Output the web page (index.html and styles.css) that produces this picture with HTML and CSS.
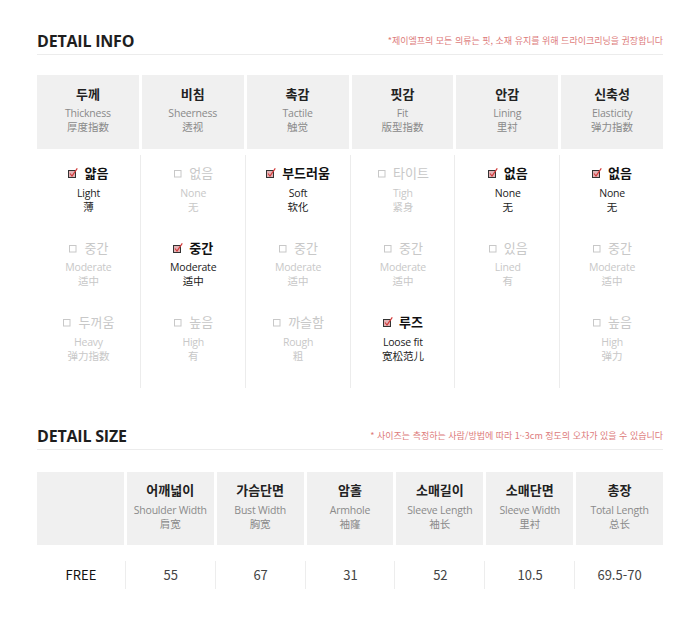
FILE: index.html
```html
<!DOCTYPE html>
<html lang="ko">
<head>
<meta charset="utf-8">
<title>Detail</title>
<link rel="stylesheet" href="styles.css">
</head>
<body>
<div class="page">
  <section class="sec info-sec">
    <div class="sec-head">
      <h2 class="sec-title">DETAIL INFO</h2>
      <p class="sec-note">*제이엘프의 모든 의류는 핏, 소재 유지를 위해 드라이크리닝을 권장합니다</p>
    </div>
    <div class="info-grid head-row">
      <div class="hcell"><div class="ko">두께</div><div class="en">Thickness</div><div class="zh">厚度指数</div></div>
      <div class="hcell"><div class="ko">비침</div><div class="en">Sheerness</div><div class="zh">透视</div></div>
      <div class="hcell"><div class="ko">촉감</div><div class="en">Tactile</div><div class="zh">触觉</div></div>
      <div class="hcell"><div class="ko">핏감</div><div class="en">Fit</div><div class="zh">版型指数</div></div>
      <div class="hcell"><div class="ko">안감</div><div class="en">Lining</div><div class="zh">里衬</div></div>
      <div class="hcell"><div class="ko">신축성</div><div class="en">Elasticity</div><div class="zh">弹力指数</div></div>
    </div>
    <div class="info-grid body-row">
      <div class="col">
        <div class="opt on"><div class="ko"><svg class="cb" viewBox="0 0 10 10"><rect x="0.5" y="2.5" width="7" height="7" fill="#e3b3b6" stroke="#333"/><polyline points="2,5.5 4,8 9.3,0.3" fill="none" stroke="#d23b3b" stroke-width="1.2"/></svg>얇음</div><div class="en">Light</div><div class="zh">薄</div></div>
        <div class="opt"><div class="ko"><svg class="cb" viewBox="0 0 10 10"><rect x="1.5" y="2.5" width="6.5" height="6.5" fill="none" stroke="#c8c8c8"/></svg>중간</div><div class="en">Moderate</div><div class="zh">适中</div></div>
        <div class="opt"><div class="ko"><svg class="cb" viewBox="0 0 10 10"><rect x="1.5" y="2.5" width="6.5" height="6.5" fill="none" stroke="#c8c8c8"/></svg>두꺼움</div><div class="en">Heavy</div><div class="zh">弹力指数</div></div>
      </div>
      <div class="col">
        <div class="opt"><div class="ko"><svg class="cb" viewBox="0 0 10 10"><rect x="1.5" y="2.5" width="6.5" height="6.5" fill="none" stroke="#c8c8c8"/></svg>없음</div><div class="en">None</div><div class="zh">无</div></div>
        <div class="opt on"><div class="ko"><svg class="cb" viewBox="0 0 10 10"><rect x="0.5" y="2.5" width="7" height="7" fill="#e3b3b6" stroke="#333"/><polyline points="2,5.5 4,8 9.3,0.3" fill="none" stroke="#d23b3b" stroke-width="1.2"/></svg>중간</div><div class="en">Moderate</div><div class="zh">适中</div></div>
        <div class="opt"><div class="ko"><svg class="cb" viewBox="0 0 10 10"><rect x="1.5" y="2.5" width="6.5" height="6.5" fill="none" stroke="#c8c8c8"/></svg>높음</div><div class="en">High</div><div class="zh">有</div></div>
      </div>
      <div class="col">
        <div class="opt on"><div class="ko"><svg class="cb" viewBox="0 0 10 10"><rect x="0.5" y="2.5" width="7" height="7" fill="#e3b3b6" stroke="#333"/><polyline points="2,5.5 4,8 9.3,0.3" fill="none" stroke="#d23b3b" stroke-width="1.2"/></svg>부드러움</div><div class="en">Soft</div><div class="zh">软化</div></div>
        <div class="opt"><div class="ko"><svg class="cb" viewBox="0 0 10 10"><rect x="1.5" y="2.5" width="6.5" height="6.5" fill="none" stroke="#c8c8c8"/></svg>중간</div><div class="en">Moderate</div><div class="zh">适中</div></div>
        <div class="opt"><div class="ko"><svg class="cb" viewBox="0 0 10 10"><rect x="1.5" y="2.5" width="6.5" height="6.5" fill="none" stroke="#c8c8c8"/></svg>까슬함</div><div class="en">Rough</div><div class="zh">粗</div></div>
      </div>
      <div class="col">
        <div class="opt"><div class="ko"><svg class="cb" viewBox="0 0 10 10"><rect x="1.5" y="2.5" width="6.5" height="6.5" fill="none" stroke="#c8c8c8"/></svg>타이트</div><div class="en">Tigh</div><div class="zh">紧身</div></div>
        <div class="opt"><div class="ko"><svg class="cb" viewBox="0 0 10 10"><rect x="1.5" y="2.5" width="6.5" height="6.5" fill="none" stroke="#c8c8c8"/></svg>중간</div><div class="en">Moderate</div><div class="zh">适中</div></div>
        <div class="opt on"><div class="ko"><svg class="cb" viewBox="0 0 10 10"><rect x="0.5" y="2.5" width="7" height="7" fill="#e3b3b6" stroke="#333"/><polyline points="2,5.5 4,8 9.3,0.3" fill="none" stroke="#d23b3b" stroke-width="1.2"/></svg>루즈</div><div class="en">Loose fit</div><div class="zh">宽松范儿</div></div>
      </div>
      <div class="col">
        <div class="opt on"><div class="ko"><svg class="cb" viewBox="0 0 10 10"><rect x="0.5" y="2.5" width="7" height="7" fill="#e3b3b6" stroke="#333"/><polyline points="2,5.5 4,8 9.3,0.3" fill="none" stroke="#d23b3b" stroke-width="1.2"/></svg>없음</div><div class="en">None</div><div class="zh">无</div></div>
        <div class="opt"><div class="ko"><svg class="cb" viewBox="0 0 10 10"><rect x="1.5" y="2.5" width="6.5" height="6.5" fill="none" stroke="#c8c8c8"/></svg>있음</div><div class="en">Lined</div><div class="zh">有</div></div>
      </div>
      <div class="col">
        <div class="opt on"><div class="ko"><svg class="cb" viewBox="0 0 10 10"><rect x="0.5" y="2.5" width="7" height="7" fill="#e3b3b6" stroke="#333"/><polyline points="2,5.5 4,8 9.3,0.3" fill="none" stroke="#d23b3b" stroke-width="1.2"/></svg>없음</div><div class="en">None</div><div class="zh">无</div></div>
        <div class="opt"><div class="ko"><svg class="cb" viewBox="0 0 10 10"><rect x="1.5" y="2.5" width="6.5" height="6.5" fill="none" stroke="#c8c8c8"/></svg>중간</div><div class="en">Moderate</div><div class="zh">适中</div></div>
        <div class="opt"><div class="ko"><svg class="cb" viewBox="0 0 10 10"><rect x="1.5" y="2.5" width="6.5" height="6.5" fill="none" stroke="#c8c8c8"/></svg>높음</div><div class="en">High</div><div class="zh">弹力</div></div>
      </div>
    </div>
  </section>

  <section class="sec size-sec">
    <div class="sec-head">
      <h2 class="sec-title">DETAIL SIZE</h2>
      <p class="sec-note">* 사이즈는 측정하는 사람/방법에 따라 1~3cm 정도의 오차가 있을 수 있습니다</p>
    </div>
    <div class="size-grid size-head">
      <div class="scell"></div>
      <div class="scell"><div class="ko">어깨넓이</div><div class="en">Shoulder Width</div><div class="zh">肩宽</div></div>
      <div class="scell"><div class="ko">가슴단면</div><div class="en">Bust Width</div><div class="zh">胸宽</div></div>
      <div class="scell"><div class="ko">암홀</div><div class="en">Armhole</div><div class="zh">袖窿</div></div>
      <div class="scell"><div class="ko">소매길이</div><div class="en">Sleeve Length</div><div class="zh">袖长</div></div>
      <div class="scell"><div class="ko">소매단면</div><div class="en">Sleeve Width</div><div class="zh">里衬</div></div>
      <div class="scell"><div class="ko">총장</div><div class="en">Total Length</div><div class="zh">总长</div></div>
    </div>
    <div class="size-grid size-data">
      <div class="dcell name">FREE</div>
      <div class="dcell">55</div>
      <div class="dcell">67</div>
      <div class="dcell">31</div>
      <div class="dcell">52</div>
      <div class="dcell">10.5</div>
      <div class="dcell">69.5-70</div>
    </div>
  </section>
</div>
</body>
</html>
```

FILE: styles.css
```css
* { box-sizing: border-box; }
html, body { margin: 0; padding: 0; background: #fff; }
body {
  font-family: "Open Sans", "Noto Sans CJK KR", sans-serif;
  color: #222;
}
.page {
  width: 626px;
  margin-left: 37px;
  padding-top: 31px;
}
.sec-head {
  display: flex;
  justify-content: space-between;
  align-items: center;
  border-bottom: 1px solid #ececec;
  padding-bottom: 3px;
  height: 24px;
}
.sec-title {
  margin: 0;
  font-family: "Open Sans", sans-serif;
  font-weight: 700;
  font-size: 16px;
  line-height: 20px;
  color: #1e1e1e;
  letter-spacing: -0.2px;
}
.sec-note {
  margin: 0;
  font-family: "Noto Sans CJK KR", sans-serif;
  font-size: 9px;
  line-height: 12px;
  color: #dd7b7b;
  letter-spacing: 0;
}
.ko {
  font-family: "Noto Sans CJK KR", sans-serif;
  font-weight: 700;
  font-size: 13px;
  line-height: 18px;
  color: #222;
}
.en {
  font-family: "Open Sans", sans-serif;
  font-size: 10.5px;
  line-height: 13px;
  color: #8a8a8a;
  letter-spacing: -0.2px;
}
.zh {
  font-family: "Noto Sans CJK SC", sans-serif;
  font-size: 10.5px;
  line-height: 13px;
  color: #8a8a8a;
}
.info-grid {
  display: grid;
  grid-template-columns: repeat(6, 1fr);
  column-gap: 3px;
}
.head-row { margin-top: 20px; }
.hcell {
  background: #f0f0f0;
  height: 74px;
  padding-top: 10px;
  text-align: center;
}
.hcell .ko { margin-bottom: 3.5px; }
.body-row {
  margin-top: 6px;
  height: 220px;
}
.col {
  padding-top: 9px;
  text-align: center;
}
.col:not(:last-child) {
  border-right: 1px solid #ececec;
  margin-right: -2px;
}
.opt { height: 74.5px; }
.opt .ko {
  display: flex;
  justify-content: center;
  align-items: center;
  gap: 6px;
  font-weight: 400;
  color: #c8c8c8;
  margin-bottom: 4.5px;
}
.opt .en, .opt .zh { color: #c8c8c8; }
.opt.on .ko { font-weight: 700; color: #111; }
.opt.on .en, .opt.on .zh { color: #222; }
.cb { width: 10px; height: 10px; flex: none; }

.size-sec { margin-top: 51px; }
.size-grid {
  display: grid;
  grid-template-columns: repeat(7, 1fr);
  column-gap: 3px;
}
.size-head { margin-top: 22px; }
.scell {
  background: #f0f0f0;
  height: 73px;
  padding-top: 9px;
  text-align: center;
}
.scell .ko { margin-bottom: 5px; }
.size-data { margin-top: 16px; }
.dcell {
  height: 28px;
  line-height: 28px;
  text-align: center;
  font-family: "Noto Sans CJK KR", sans-serif;
  font-size: 13px;
  color: #444;
}
.dcell:not(:last-child) {
  border-right: 1px solid #ededed;
  margin-right: -2px;
}
.dcell.name { color: #111; }
```
